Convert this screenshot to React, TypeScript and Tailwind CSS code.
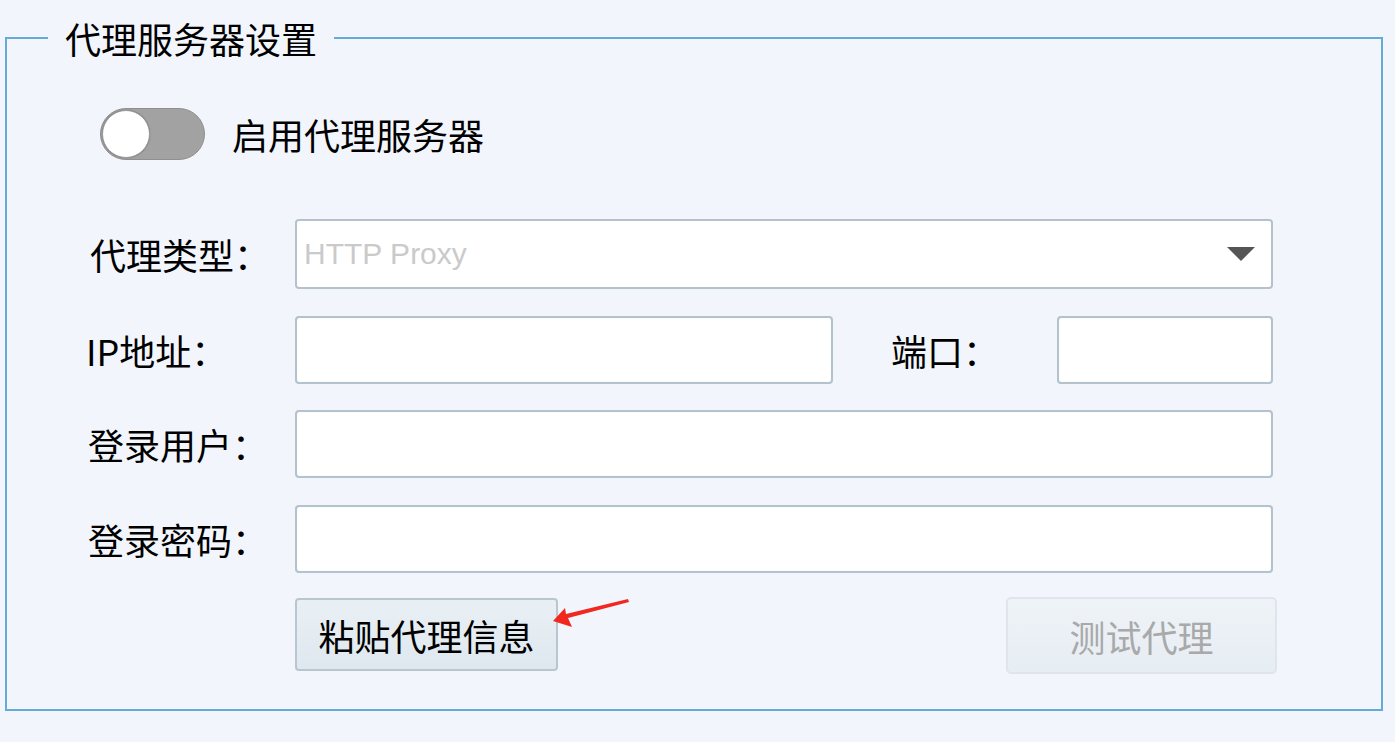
import React from "react";

const cjk = "font-['Noto_Sans_CJK_SC','Noto_Sans',sans-serif]";

function Label({ children, className = "" }: { children: React.ReactNode; className?: string }) {
  return (
    <div className={`${cjk} text-[36px] leading-none text-black whitespace-nowrap ${className}`}>{children}</div>
  );
}

function TextBox({ className = "" }: { className?: string }) {
  return (
    <div
      className={`h-[68px] rounded-[4px] border-2 border-[#b3c2cc] bg-white shadow-[inset_0_0_1px_#d5dde2] ${className}`}
    />
  );
}

export default function App() {
  return (
    <div className="relative w-[1395px] h-[742px] bg-[#f2f6fc] overflow-hidden pt-[18px] pl-[5px]">
      <fieldset className="w-[1378px] h-[693px] border-2 border-[#64abd6] flex flex-col">
        <legend className={`${cjk} ml-[41px] px-[17px] text-[36px] leading-[40px] text-black`}>
          代理服务器设置
        </legend>

        {/* toggle row */}
        <div className="mt-[50px] ml-[93px] flex items-center h-[52px]">
          <div className="relative w-[105px] h-[52px] rounded-full bg-[#a2a2a2] border border-[#8f8f8f]">
            <div className="absolute left-[1px] top-[1px] w-[48px] h-[48px] rounded-full bg-white border border-[#9a9a9a] shadow-[0_0_1px_#666]" />
          </div>
          <Label className="ml-[27px]">启用代理服务器</Label>
        </div>

        {/* form rows */}
        <div className="mt-[59px] ml-[81px] mr-[108px] flex flex-col">
          <div className="flex items-center">
            <Label className="w-[207px] pl-[2px]">代理类型：</Label>
            <div className="flex-1 h-[70px] rounded-[4px] border-2 border-[#b3c2cc] bg-white flex items-center justify-between pl-[7px] pr-[16px]">
              <span className="font-['Liberation_Sans',Arial,sans-serif] text-[30px] leading-none text-[#cacaca]">
                HTTP Proxy
              </span>
              <svg width="28" height="14" viewBox="0 0 28 14">
                <polygon points="0,0 28,0 14,14" fill="#555555" />
              </svg>
            </div>
          </div>

          <div className="flex items-center mt-[27px]">
            <Label className="w-[207px] -ml-[2px]">IP地址：</Label>
            <TextBox className="w-[538px] ml-[2px]" />
            <Label className="ml-[58px] w-[166px]">端口：</Label>
            <TextBox className="flex-1" />
          </div>

          <div className="flex items-center mt-[26px]">
            <Label className="w-[207px]">登录用户：</Label>
            <TextBox className="flex-1" />
          </div>

          <div className="flex items-center mt-[27px]">
            <Label className="w-[207px]">登录密码：</Label>
            <TextBox className="flex-1" />
          </div>

          <div className="flex items-start justify-between mt-[24px] pl-[207px] -mr-[4px]">
            <button className="w-[263px] h-[73px] mt-[1px] rounded-[4px] border-2 border-[#b9c6cf] bg-gradient-to-b from-[#e9f0f5] to-[#dfe8ef] flex items-center justify-center">
              <span className={`${cjk} text-[36px] leading-none text-black`}>粘贴代理信息</span>
            </button>
            <button
              disabled
              className="w-[271px] h-[77px] rounded-[5px] border-2 border-[#dfe5ea] bg-gradient-to-b from-[#eef3f7] to-[#e6edf3] flex items-center justify-center"
            >
              <span className={`${cjk} text-[36px] leading-none text-[#a9a9a9]`}>测试代理</span>
            </button>
          </div>
        </div>
      </fieldset>

      {/* red annotation arrow */}
      <svg className="absolute left-[548px] top-[596px]" width="86" height="36" viewBox="548 596 86 36">
        <polygon
          points="628,599 629,602 568,618 572,627 553,621 565,608 566,614"
          fill="#f0281f"
        />
      </svg>
    </div>
  );
}
